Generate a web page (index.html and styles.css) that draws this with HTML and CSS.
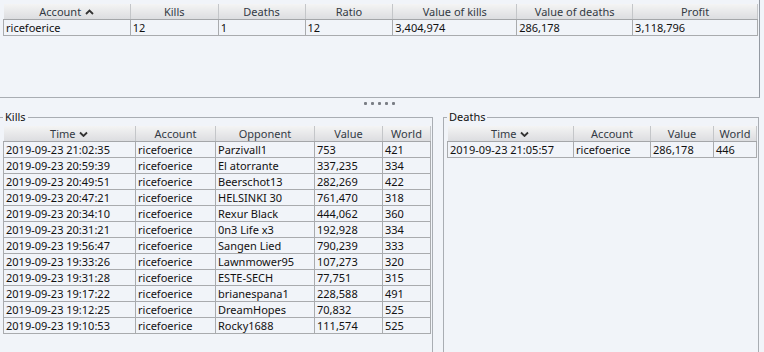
FILE: index.html
```html
<!DOCTYPE html>
<html>
<head>
<meta charset="utf-8">
<link rel="stylesheet" href="styles.css">
</head>
<body>
<div class="app">
  <div class="top-panel">
    <table class="grid">
      <colgroup>
        <col style="width:127px"><col style="width:88px"><col style="width:87px"><col style="width:88px"><col style="width:124px"><col style="width:116px"><col style="width:125px">
      </colgroup>
      <thead>
        <tr>
          <th>Account <svg class="sort" width="9" height="6" viewBox="0 0 9 6"><path d="M1 5 L4.5 1.5 L8 5" fill="none" stroke="#333" stroke-width="1.8"/></svg></th>
          <th>Kills</th><th>Deaths</th><th>Ratio</th><th>Value of kills</th><th>Value of deaths</th><th>Profit</th>
        </tr>
      </thead>
      <tbody>
        <tr><td>ricefoerice</td><td>12</td><td>1</td><td>12</td><td>3,404,974</td><td>286,178</td><td>3,118,796</td></tr>
      </tbody>
    </table>
  </div>
  <div class="splitter"><span class="dot"></span><span class="dot"></span><span class="dot"></span><span class="dot"></span><span class="dot"></span></div>
  <div class="bottom">
    <fieldset class="box kills">
      <legend>Kills</legend>
      <table class="grid">
        <colgroup>
          <col style="width:132px"><col style="width:80px"><col style="width:99px"><col style="width:68px"><col style="width:48px">
        </colgroup>
        <thead>
          <tr>
            <th>Time <svg class="sort" width="9" height="6" viewBox="0 0 9 6"><path d="M1 1.5 L4.5 5 L8 1.5" fill="none" stroke="#333" stroke-width="1.8"/></svg></th>
            <th>Account</th><th>Opponent</th><th>Value</th><th>World</th>
          </tr>
        </thead>
        <tbody>
          <tr><td>2019-09-23 21:02:35</td><td>ricefoerice</td><td>Parzivall1</td><td>753</td><td>421</td></tr>
          <tr><td>2019-09-23 20:59:39</td><td>ricefoerice</td><td>El atorrante</td><td>337,235</td><td>334</td></tr>
          <tr><td>2019-09-23 20:49:51</td><td>ricefoerice</td><td>Beerschot13</td><td>282,269</td><td>422</td></tr>
          <tr><td>2019-09-23 20:47:21</td><td>ricefoerice</td><td>HELSINKI 30</td><td>761,470</td><td>318</td></tr>
          <tr><td>2019-09-23 20:34:10</td><td>ricefoerice</td><td>Rexur Black</td><td>444,062</td><td>360</td></tr>
          <tr><td>2019-09-23 20:31:21</td><td>ricefoerice</td><td>0n3 Life x3</td><td>192,928</td><td>334</td></tr>
          <tr><td>2019-09-23 19:56:47</td><td>ricefoerice</td><td>Sangen Lied</td><td>790,239</td><td>333</td></tr>
          <tr><td>2019-09-23 19:33:26</td><td>ricefoerice</td><td>Lawnmower95</td><td>107,273</td><td>320</td></tr>
          <tr><td>2019-09-23 19:31:28</td><td>ricefoerice</td><td>ESTE-SECH</td><td>77,751</td><td>315</td></tr>
          <tr><td>2019-09-23 19:17:22</td><td>ricefoerice</td><td>brianespana1</td><td>228,588</td><td>491</td></tr>
          <tr><td>2019-09-23 19:12:25</td><td>ricefoerice</td><td>DreamHopes</td><td>70,832</td><td>525</td></tr>
          <tr><td>2019-09-23 19:10:53</td><td>ricefoerice</td><td>Rocky1688</td><td>111,574</td><td>525</td></tr>
        </tbody>
      </table>
    </fieldset>
    <fieldset class="box deaths">
      <legend>Deaths</legend>
      <table class="grid">
        <colgroup>
          <col style="width:126px"><col style="width:77px"><col style="width:63px"><col style="width:43px">
        </colgroup>
        <thead>
          <tr>
            <th>Time <svg class="sort" width="9" height="6" viewBox="0 0 9 6"><path d="M1 1.5 L4.5 5 L8 1.5" fill="none" stroke="#333" stroke-width="1.8"/></svg></th>
            <th>Account</th><th>Value</th><th>World</th>
          </tr>
        </thead>
        <tbody>
          <tr><td>2019-09-23 21:05:57</td><td>ricefoerice</td><td>286,178</td><td>446</td></tr>
        </tbody>
      </table>
    </fieldset>
  </div>
</div>
</body>
</html>
```

FILE: styles.css
```css
html, body {
  margin: 0;
  padding: 0;
  background: #f1f4f9;
  overflow: hidden;
}
body {
  font-family: "Noto Sans", "Liberation Sans", sans-serif;
  font-size: 11px;
  color: #111;
}
.app {
  width: 764px;
  height: 352px;
  overflow: hidden;
}
.top-panel {
  box-sizing: border-box;
  width: 760px;
  height: 98px;
  padding: 4px 1px 0 3px;
  border-right: 1px solid #9399a2;
  border-bottom: 1px solid #a9adb3;
}
.grid {
  border-collapse: collapse;
  table-layout: fixed;
}
.grid th {
  height: 15px;
  padding: 0 2px;
  line-height: 15px;
  font-weight: normal;
  color: #333a44;
  text-align: center;
  white-space: nowrap;
  background: linear-gradient(#f4f4f4, #dcdde0);
  border-left: 1px solid #c4c6c9;
  border-right: 1px solid #c4c6c9;
  border-bottom: 1px solid #a4a6a9;
}
.grid th:first-child { border-left: none; }
.grid td {
  height: 15px;
  padding: 0 2px;
  line-height: 15px;
  white-space: nowrap;
  overflow: hidden;
  border: 1px solid #a9abae;
  border-top: none;
}
.sort {
  vertical-align: 1px;
  margin-left: 1px;
}
.splitter {
  box-sizing: border-box;
  height: 11px;
  padding-top: 4px;
  display: flex;
  justify-content: center;
  align-items: flex-start;
  gap: 4px;
  width: 759px;
}
.dot {
  width: 3px;
  height: 3px;
  background: #7a7e85;
  border-radius: 1px;
}
.bottom {
  display: flex;
  gap: 10px;
  margin-left: -1px;
}
.box {
  margin: 0;
  border: 1px solid #a9adb3;
  padding: 1px 0 0 3px;
  height: 260px;
  box-sizing: border-box;
}
.box legend {
  padding: 0 2px;
  line-height: 16px;
  color: #111;
}
.kills {
  width: 434px;
  padding-right: 1px;
}
.deaths {
  width: 316px;
}
```
